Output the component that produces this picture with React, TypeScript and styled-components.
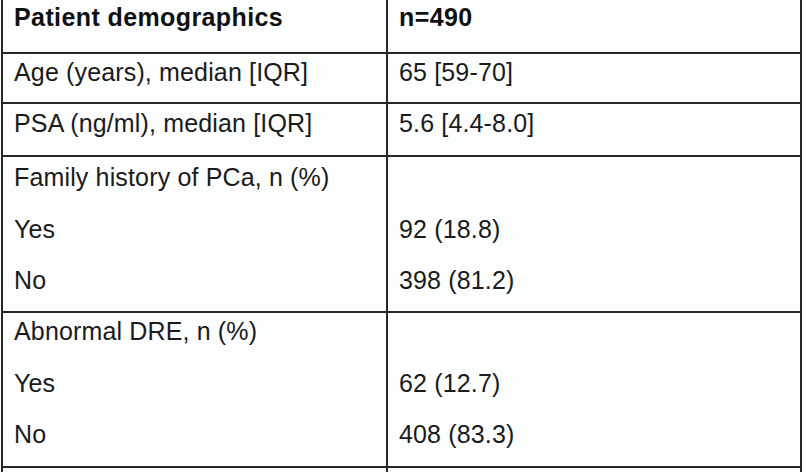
import React from "react";
import styled, { createGlobalStyle } from "styled-components";

const GlobalStyle = createGlobalStyle`
  html, body {
    margin: 0;
    padding: 0;
    background: #fcfdfd;
    overflow: hidden;
  }
`;

const Page = styled.div`
  width: 806px;
  height: 472px;
  padding-left: 1px;
  box-sizing: border-box;
  overflow: hidden;
`;

const Table = styled.table`
  border-collapse: collapse;
  table-layout: fixed;
  width: 799px;
  font-family: "Liberation Sans", Arial, sans-serif;
  font-size: 25px;
  color: #1b1b1b;
`;

const Cell = styled.td<{ $head?: boolean }>`
  border: 2px solid #262626;
  border-top: ${(p) => (p.$head ? "none" : "2px solid #262626")};
  padding: 0 0 0 11px;
  vertical-align: top;
  font-weight: ${(p) => (p.$head ? 700 : 400)};
  letter-spacing: ${(p) => (p.$head ? "0.4px" : "0.15px")};
  color: ${(p) => (p.$head ? "#111" : "#1b1b1b")};
  white-space: nowrap;
`;

const Line = styled.div<{ $h: number; $pad: number }>`
  height: ${(p) => p.$h}px;
  padding-top: ${(p) => p.$pad}px;
  line-height: 30px;
  box-sizing: border-box;
`;

type Row = { left: string[]; right: string[]; heights: number[]; pad: number; head?: boolean };

const rows: Row[] = [
  { left: ["Patient demographics"], right: ["n=490"], heights: [52], pad: 2, head: true },
  { left: ["Age (years), median [IQR]"], right: ["65 [59-70]"], heights: [48], pad: 3 },
  { left: ["PSA (ng/ml), median [IQR]"], right: ["5.6 [4.4-8.0]"], heights: [51], pad: 4 },
  {
    left: ["Family history of PCa, n (%)", "Yes", "No"],
    right: ["", "92 (18.8)", "398 (81.2)"],
    heights: [52, 51, 51],
    pad: 5,
  },
  {
    left: ["Abnormal DRE, n (%)", "Yes", "No"],
    right: ["", "62 (12.7)", "408 (83.3)"],
    heights: [52, 51, 50],
    pad: 3,
  },
  { left: [""], right: [""], heights: [20], pad: 0 },
];

export default function App() {
  return (
    <Page>
      <GlobalStyle />
      <Table>
        <colgroup>
          <col style={{ width: 385 }} />
          <col style={{ width: 414 }} />
        </colgroup>
        <tbody>
          {rows.map((r, i) => (
            <tr key={i}>
              <Cell $head={r.head}>
                {r.left.map((t, j) => (
                  <Line key={j} $h={r.heights[j]} $pad={r.pad}>
                    {t}
                  </Line>
                ))}
              </Cell>
              <Cell $head={r.head}>
                {r.right.map((t, j) => (
                  <Line key={j} $h={r.heights[j]} $pad={r.pad}>
                    {t}
                  </Line>
                ))}
              </Cell>
            </tr>
          ))}
        </tbody>
      </Table>
    </Page>
  );
}
